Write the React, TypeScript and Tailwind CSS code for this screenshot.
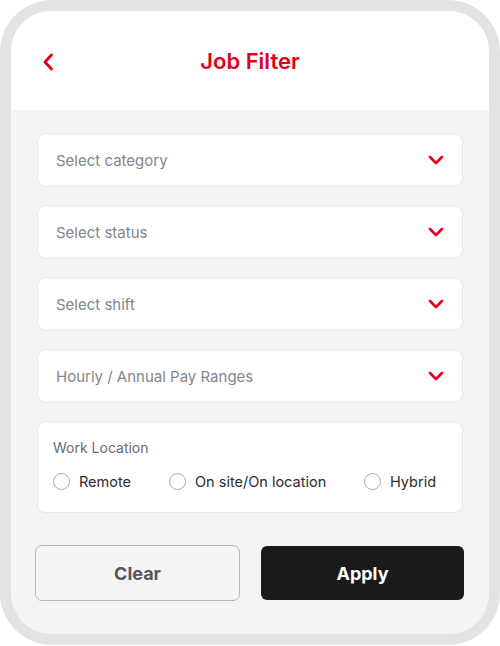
import React from 'react'

const Chevron = () => (
  <svg width="16" height="10" viewBox="0 0 16 10" fill="none">
    <path d="M2 2l6 6 6-6" stroke="#e0001b" strokeWidth="2.6" strokeLinecap="round" strokeLinejoin="round" />
  </svg>
)

const Select = ({ label }: { label: string }) => (
  <div className="h-[54px] bg-white rounded-[9px] border border-[#e4e7ee] flex items-center justify-between pl-[18px] pr-[18px]">
    <span className="text-[15px] text-[#85858c] mt-[2px]">{label}</span>
    <Chevron />
  </div>
)

const Radio = ({ label, className }: { label: string; className?: string }) => (
  <div className={`flex items-center gap-[9px] ${className ?? ''}`}>
    <span className="w-[17px] h-[17px] rounded-full border border-[#a9a9ae] bg-white" />
    <span className="text-[14.5px] text-[#2c2c30]">{label}</span>
  </div>
)

const App = () => {
  return (
    <div className="w-[500px] h-[646px] bg-white font-['Inter',sans-serif]">
      <div className="h-[645px] bg-[#e3e3e3] rounded-[52px] p-[11px]">
        <div className="h-full rounded-[40px] overflow-hidden bg-[#f4f4f6] flex flex-col">
          <div className="h-[99px] bg-white relative flex items-start justify-center pt-[36px]">
            <div className="absolute left-[31px] top-[42px]">
              <svg width="12" height="18" viewBox="0 0 12 18" fill="none">
                <path d="M9.5 2L3 9l6.5 7" stroke="#e0001b" strokeWidth="2.8" strokeLinecap="round" strokeLinejoin="round" />
              </svg>
            </div>
            <h1 className="text-[22px] leading-[28px] font-semibold text-[#e0001b]">Job Filter</h1>
          </div>

          <div className="px-[26px] pt-[23px] flex flex-col gap-[18px]">
            <Select label="Select category" />
            <Select label="Select status" />
            <Select label="Select shift" />
            <Select label="Hourly / Annual Pay Ranges" />

            <div className="h-[92px] bg-white rounded-[9px] border border-[#e4e7ee] px-[15px] pt-[15px]">
              <p className="text-[14px] text-[#6a6a70]">Work Location</p>
              <div className="flex items-center mt-[13px]">
                <Radio label="Remote" className="w-[116px]" />
                <Radio label="On site/On location" className="w-[195px]" />
                <Radio label="Hybrid" />
              </div>
            </div>
          </div>

          <div className="px-[24px] mt-[32px] flex gap-[21px]">
            <button className="w-[205px] h-[56px] rounded-[7px] border border-[#b5b5b8] text-[18px] font-bold text-[#56565a]">Clear</button>
            <button className="w-[203px] h-[54px] mt-px rounded-[6px] bg-[#1a1a1a] text-[18px] font-bold text-white">Apply</button>
          </div>
        </div>
      </div>
    </div>
  )
}

export default App
